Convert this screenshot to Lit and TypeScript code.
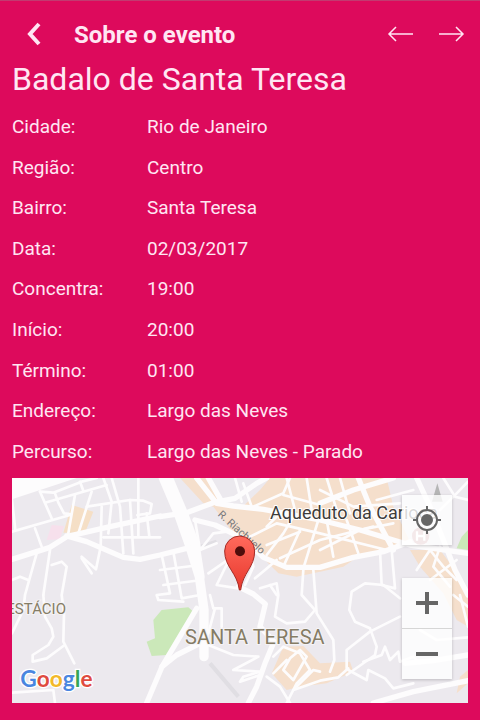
import { LitElement, html, svg, css } from "lit";
import { customElement } from "lit/decorators.js";

const details: [string, string][] = [
  ["Cidade:", "Rio de Janeiro"],
  ["Região:", "Centro"],
  ["Bairro:", "Santa Teresa"],
  ["Data:", "02/03/2017"],
  ["Concentra:", "19:00"],
  ["Início:", "20:00"],
  ["Término:", "01:00"],
  ["Endereço:", "Largo das Neves"],
  ["Percurso:", "Largo das Neves - Parado"],
];

// Street geometry, grouped by road class.
const avenues = [
  "M490 24L535 130L568 224L598 320L612 420L612 560",
  "M505 24L550 130L585 224L600 320",
];
const mainRoads = [
  "M36 268L150 232L200 200L330 170L480 138",
  "M200 198L260 215L370 262L420 268L480 255L560 235",
  "M480 140L560 128L640 98L705 85L770 40L800 24",
  "M590 24L650 100L700 108L790 118L960 150L1080 180L1230 225L1404 250",
  "M625 24L668 100",
  "M585 150L645 165L730 205L790 262L860 292L960 292L1060 262L1150 245L1230 215",
  "M1075 24L1110 110L1180 240",
  "M960 100L1060 60L1180 24",
  "M1250 24L1290 110L1330 210L1365 300L1404 375",
  "M486 590L530 555L600 520",
  "M715 350L760 372L796 402L780 470L822 515L795 580L770 650L745 699",
  "M590 415L486 590L440 699",
  "M1120 699L1240 665L1404 632",
  "M1215 580L1300 572L1404 555",
];
const streets = [
  "M36 185L210 135", "M36 90L46 180", "M120 65L155 145", "M120 65L160 68L245 35L290 24",
  "M135 98L320 45", "M240 35L250 62", "M165 70L175 98L192 130L210 132", "M225 75L205 190",
  "M275 65L235 190", "M310 24L335 95L325 190", "M335 24L360 110L370 250",
  "M260 110L390 90L430 92L455 102L450 130L412 135", "M415 24L415 200", "M390 90L400 250",
  "M310 202L480 202", "M440 130L448 200", "M305 110L302 230L288 298L245 260", "M275 310L245 265",
  "M105 175L125 230", "M150 240L130 375", "M110 250L75 375L70 420L36 490",
  "M155 285L185 275L200 290L185 375L192 430L190 515L223 580", "M36 330L60 320L85 330",
  "M130 375L135 440L155 475L160 500L145 525L98 555L98 575L140 565L190 528",
  "M36 668L160 660L165 699", "M480 300L600 285", "M490 345L605 330",
  "M485 255L510 370L470 375L475 390L550 395", "M520 245L545 385L600 375", "M585 150L600 240L640 190L680 185",
  "M600 240L650 220", "M730 40L755 110", "M705 24L725 95", "M870 24L850 70L760 110",
  "M860 24L885 120", "M920 24L935 120", "M850 75L960 105", "M800 170L840 130",
  "M750 200L830 160L960 190L1160 240", "M800 255L850 190L880 140", "M850 290L900 180",
  "M910 295L955 150", "M800 225L900 185", "M840 265L960 210L1120 170", "M625 310L690 265L672 300L650 345L715 355",
  "M745 230L760 290L735 345", "M765 325L795 300L830 270", "M780 355L830 340L835 375L825 440L860 460L915 455L945 420L905 375L910 300", "M810 345L830 375",
  "M940 300L950 430L1000 510L1003 570L990 605",
  "M980 24L1010 120", "M1020 24L1050 130", "M960 60L1060 110L1200 100", "M980 150L1000 260",
  "M960 240L1080 180L1180 160", "M1040 150L1075 250", "M1130 90L1240 60", "M1140 240L1145 345L1185 355L1175 240",
  "M1200 385L1150 345L1095 340L1055 365L1048 420L1065 455L1110 475L1130 530L1125 555L1040 615", "M1330 24L1365 80L1404 90", "M1404 35L1370 70L1320 120",
  "M1250 300L1290 240L1330 290L1370 330", "M1320 230L1300 290L1350 350", "M1290 330L1370 270",
  "M630 375L640 415L665 415L665 470", "M645 415L625 490L600 510",
  "M625 525L700 555L775 560L700 600L780 605L730 620L720 635L780 615",
  "M820 560L850 530L900 550L930 600L890 640L860 699",
  "M800 620L840 650L870 699", "M870 565L900 540L920 560L880 630L850 600L870 565", "M820 610L860 570",
  "M890 650L940 600L960 605", "M880 660L960 632L1015 622L1045 595",
  "M1040 595L1040 540L1110 485L1200 440", "M1090 575L1145 555L1155 530L1170 570L1195 545L1200 575L1240 560L1260 580",
  "M1045 600L1100 630L1105 600L1155 625L1180 655L1240 640",
  "M1360 375L1404 410", "M1260 480L1310 510L1404 502", "M1380 375L1404 470",
];

const map = svg`
  <defs>
    <linearGradient id="pin" x1="0" y1="0" x2="0" y2="1">
      <stop offset="0" stop-color="#ff6a5c" />
      <stop offset="1" stop-color="#e8382d" />
    </linearGradient>
  </defs>
  <rect class="land" x="36" y="24" width="1368" height="675" />
  <path class="blank" d="M36 24H230L36 88Z" />
  <path class="block" d="M215 105L280 125L255 188L190 188Z" />
  <path class="rose" d="M155 165L192 168L180 208L140 210Z" />
  <path class="zone" d="M540 24H622L680 105L720 118L780 60L810 24H1160L1180 110L1230 215L1060 270L1030 290L890 320L835 310L780 255L700 190L640 110L610 100Z" />
  <path class="zone" d="M1230 240L1320 240L1350 280L1404 375V470L1370 450L1330 370L1260 290Z" />
  <path class="zone" d="M815 610L850 530L910 528L960 580L1050 575L1060 605L980 640L900 650L860 660Z" />
  <path class="zone" d="M1404 600L1380 620L1370 670L1404 640Z" />
  <path class="park" d="M440 515L465 505L460 450L485 420L565 412L580 425L500 555L455 558Z" />
  <path class="park" d="M1370 235L1385 200L1404 180V240Z" />
  <path class="rail" d="M630 580L715 680" />
  <path class="rail" d="M585 235L650 215" />
  ${streets.map((d) => svg`<path class="street" d=${d} />`)}
  ${mainRoads.map((d) => svg`<path class="road" d=${d} />`)}
  ${avenues.map((d) => svg`<path class="avenue" d=${d} />`)}
  <path class="peak" d="M1296 95L1312 40L1328 95Z" />
  <circle class="metro" cx="1262" cy="198" r="26" />
  <path class="metro-mark" d="M1251 184V212M1273 184V212M1251 198H1273" />
  <text class="street-name" transform="translate(652 136) rotate(42)">R. Riachuelo</text>
  <text class="place" x="810" y="147">Aqueduto da Carioca</text>
  <text class="district small" x="198" y="431" text-anchor="end">ESTÁCIO</text>
  <text class="district" x="555" y="523">SANTA TERESA</text>
  <path class="pin" d="M718 360C712 308 674 292 674 243A45 45 0 0 1 764 243C764 292 728 308 722 360Z" />
  <circle class="pin-dot" cx="720" cy="244" r="15" />
  <text class="logo" x="61" y="652"><tspan class="b">G</tspan><tspan class="r">o</tspan><tspan class="y">o</tspan><tspan class="b">g</tspan><tspan class="g">l</tspan><tspan class="r">e</tspan></text>
`;

@customElement("app-root")
export class AppRoot extends LitElement {
  static styles = css`
    :host {
      display: flex;
      flex-direction: column;
      box-sizing: border-box;
      min-height: 100vh;
      padding: 0 12px 17px;
      border-top: 1px solid #c23a70;
      background: #dd0a5c;
      color: #ffe6f3;
      font-family: Roboto, "Liberation Sans", sans-serif;
    }
    * { box-sizing: border-box; }
    button {
      display: grid;
      place-items: center;
      margin: 0;
      padding: 0;
      border: 0;
      background: none;
      color: inherit;
      cursor: pointer;
    }
    header { display: flex; align-items: center; height: 58px; padding-top: 8px; }
    .back { width: 44px; height: 44px; }
    .title { flex: 1; margin: 0 0 0 18px; padding-top: 2px; font-size: 24px; line-height: 32px; font-weight: 700; }
    .nav { display: flex; gap: 8px; }
    .nav button { width: 44px; height: 44px; margin-right: -8px; }
    .nav button + button { margin-left: 8px; margin-right: -6px; }
    svg { display: block; fill: none; stroke: currentColor; }
    h1 { margin: 0 0 8px; font-size: 32px; line-height: 40px; font-weight: 400; }
    dl { flex: 1; display: grid; grid-auto-rows: minmax(40px, 1fr); margin: 0 0 6px; font-size: 19px; line-height: 24px; }
    .row { display: grid; grid-template-columns: 135px 1fr; align-items: center; }
    dd { margin: 0; }

    .map { position: relative; height: 225px; overflow: hidden; background: #ece9ee; }
    .canvas { width: 100%; height: 100%; stroke: none; }
    .land { fill: #ece9ee; }
    .blank { fill: #fdfcfd; }
    .zone { fill: #f5dfcc; }
    .block { fill: #f5dfc6; }
    .rose { fill: #f7e0ec; }
    .park { fill: #cbe8b9; }
    .rail { stroke: #e0dee3; stroke-width: 12; }
    .street, .road, .avenue { fill: none; stroke: #fdfcfd; stroke-linejoin: round; stroke-linecap: round; }
    .street { stroke-width: 8; }
    .road { stroke-width: 16; }
    .avenue { stroke-width: 28; }
    .peak { fill: #b5b5b5; }
    .metro { fill: #c68f96; }
    .metro-mark { stroke: #fff; stroke-width: 7; }
    .street-name { font-size: 32px; fill: #77787c; }
    .place { font-size: 54px; fill: #3e3c3a; stroke: #fff; stroke-width: 6; paint-order: stroke; }
    .district { font-size: 60px; fill: #857c65; stroke: #f5f3f5; stroke-width: 6; paint-order: stroke; }
    .small { font-size: 45px; }
    .pin { fill: url(#pin); stroke: #a52b25; stroke-width: 3; }
    .pin-dot { fill: #4f0d0b; }
    .logo { font-family: Lato, sans-serif; font-size: 68px; font-weight: 700; stroke: #fff; stroke-width: 8; paint-order: stroke; }
    .b { fill: #4a86e0; }
    .r { fill: #df4b3f; }
    .y { fill: #f3b929; }
    .g { fill: #35a556; }

    .controls { position: absolute; top: 17px; right: 16px; display: grid; gap: 33px; color: #666; }
    .controls button { width: 50px; height: 50px; background: rgba(255, 255, 255, 0.8); }
    .controls > button, .zoom { box-shadow: 0 1px 3px rgba(0, 0, 0, 0.2); }
    .zoom button + button { height: 51px; border-top: 1px solid #d6d6d6; }
  `;

  render() {
    return html`
      <header>
        <button class="back" aria-label="Voltar">
          <svg width="16" height="24" viewBox="0 0 16 24" stroke-width="4"><path d="M13 2L4 12L13 22" /></svg>
        </button>
        <h2 class="title">Sobre o evento</h2>
        <nav class="nav">
          <button aria-label="Anterior">
            <svg width="28" height="18" viewBox="0 0 28 18" stroke-width="1.5"><path d="M27 9H3M10 2L3 9L10 16" /></svg>
          </button>
          <button aria-label="Próximo">
            <svg width="28" height="18" viewBox="0 0 28 18" stroke-width="1.5"><path d="M1 9H25M18 2L25 9L18 16" /></svg>
          </button>
        </nav>
      </header>
      <h1>Badalo de Santa Teresa</h1>
      <dl>
        ${details.map(([name, value]) => html`<div class="row"><dt>${name}</dt><dd>${value}</dd></div>`)}
      </dl>
      <section class="map" aria-label="Mapa">
        <svg class="canvas" viewBox="36 24 1368 675" preserveAspectRatio="xMidYMid slice">${map}</svg>
        <div class="controls">
          <button aria-label="Minha localização">
            <svg width="30" height="30" viewBox="0 0 30 30" stroke-width="2">
              <circle cx="15" cy="15" r="10" />
              <circle cx="15" cy="15" r="5" fill="currentColor" />
              <path d="M15 1V6M15 24V29M1 15H6M24 15H29" />
            </svg>
          </button>
          <div class="zoom">
            <button aria-label="Aproximar">
              <svg width="24" height="24" viewBox="0 0 24 24" stroke-width="4"><path d="M1 12H23M12 1V23" /></svg>
            </button>
            <button aria-label="Afastar">
              <svg width="24" height="24" viewBox="0 0 24 24" stroke-width="4"><path d="M1 12H23" /></svg>
            </button>
          </div>
        </div>
      </section>
    `;
  }
}
